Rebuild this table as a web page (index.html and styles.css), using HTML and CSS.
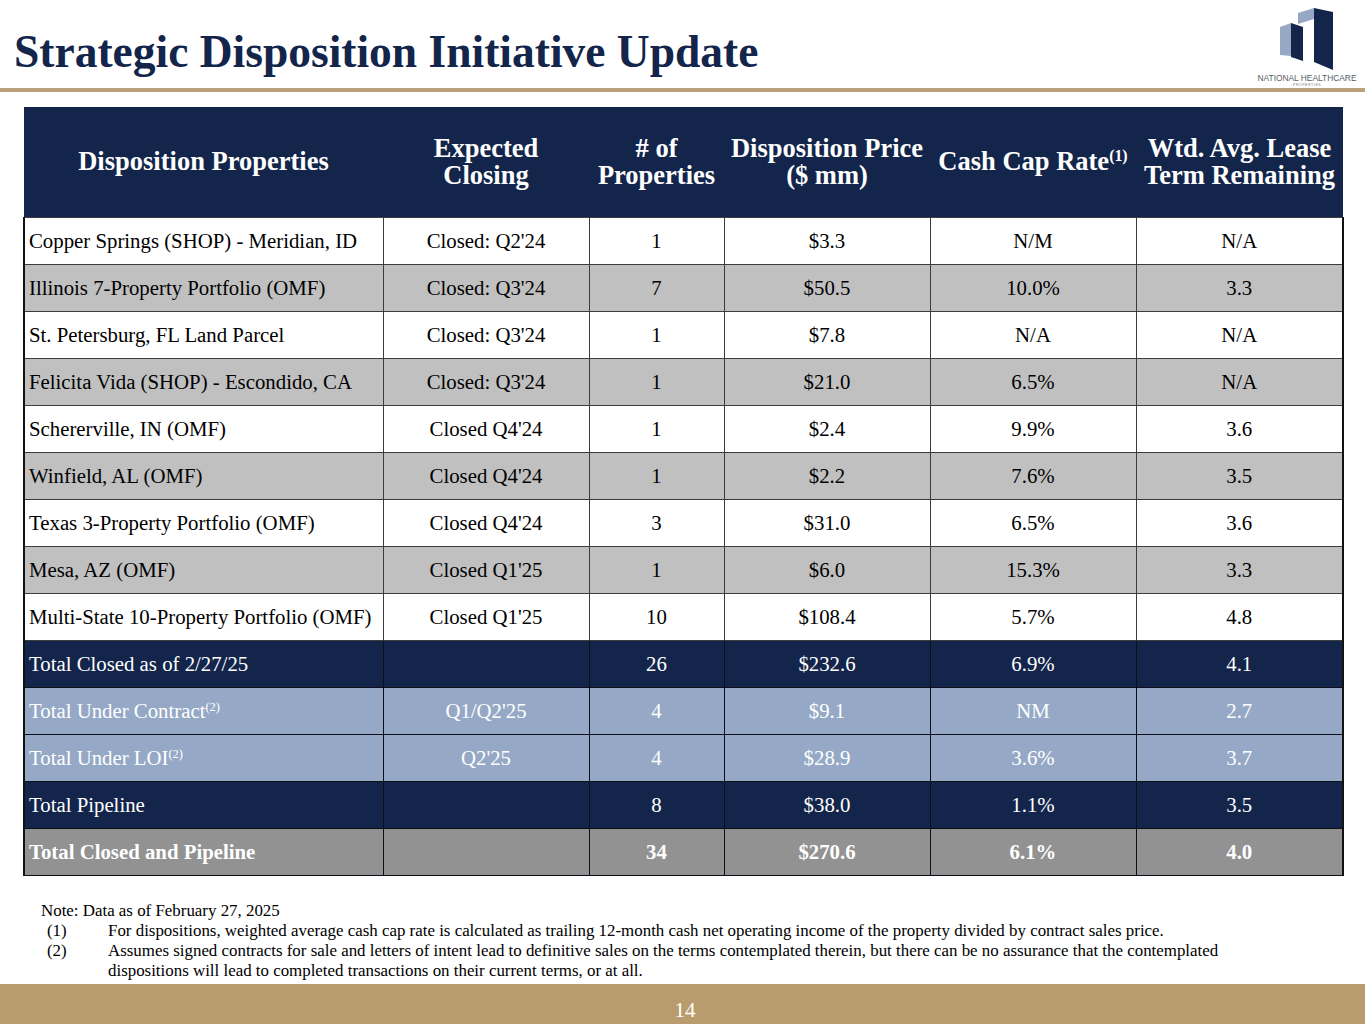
FILE: index.html
```html
<!DOCTYPE html>
<html lang="en">
<head>
<meta charset="utf-8">
<title>Strategic Disposition Initiative Update</title>
<link rel="stylesheet" href="styles.css">
</head>
<body>
<div class="page">
  <header class="top">
    <h1 class="title">Strategic Disposition Initiative Update</h1>
    <div class="logo">
      <svg class="logo-mark" width="56" height="64" viewBox="0 0 56 64" aria-hidden="true">
        <polygon points="19,7 35,2 35,13 19,18" fill="#97a8c4"/>
        <polygon points="35,2 54,6 54,64 35,56" fill="#13254b"/>
        <polygon points="1,21 12,17 12,50 1,49" fill="#97a8c4"/>
        <polygon points="12,17 24,21 24,55 12,51" fill="#13254b"/>
      </svg>
      <div class="logo-name">NATIONAL HEALTHCARE</div>
      <div class="logo-sub">PROPERTIES</div>
    </div>
  </header>
  <div class="rule"></div>

  <table class="disp">
    <colgroup>
      <col class="c1"><col class="c2"><col class="c3"><col class="c4"><col class="c5"><col class="c6">
    </colgroup>
    <thead>
      <tr>
        <th>Disposition Properties</th>
        <th>Expected<br>Closing</th>
        <th># of<br>Properties</th>
        <th>Disposition Price<br>($ mm)</th>
        <th>Cash Cap Rate<sup>(1)</sup></th>
        <th>Wtd. Avg. Lease<br>Term Remaining</th>
      </tr>
    </thead>
    <tbody>
      <tr class="w"><td class="name">Copper Springs (SHOP) - Meridian, ID</td><td>Closed: Q2'24</td><td>1</td><td>$3.3</td><td>N/M</td><td>N/A</td></tr>
      <tr class="g"><td class="name">Illinois 7-Property Portfolio (OMF)</td><td>Closed: Q3'24</td><td>7</td><td>$50.5</td><td>10.0%</td><td>3.3</td></tr>
      <tr class="w"><td class="name">St. Petersburg, FL Land Parcel</td><td>Closed: Q3'24</td><td>1</td><td>$7.8</td><td>N/A</td><td>N/A</td></tr>
      <tr class="g"><td class="name">Felicita Vida (SHOP) - Escondido, CA</td><td>Closed: Q3'24</td><td>1</td><td>$21.0</td><td>6.5%</td><td>N/A</td></tr>
      <tr class="w"><td class="name">Schererville, IN (OMF)</td><td>Closed Q4'24</td><td>1</td><td>$2.4</td><td>9.9%</td><td>3.6</td></tr>
      <tr class="g"><td class="name">Winfield, AL (OMF)</td><td>Closed Q4'24</td><td>1</td><td>$2.2</td><td>7.6%</td><td>3.5</td></tr>
      <tr class="w"><td class="name">Texas 3-Property Portfolio (OMF)</td><td>Closed Q4'24</td><td>3</td><td>$31.0</td><td>6.5%</td><td>3.6</td></tr>
      <tr class="g"><td class="name">Mesa, AZ (OMF)</td><td>Closed Q1'25</td><td>1</td><td>$6.0</td><td>15.3%</td><td>3.3</td></tr>
      <tr class="w"><td class="name">Multi-State 10-Property Portfolio (OMF)</td><td>Closed Q1'25</td><td>10</td><td>$108.4</td><td>5.7%</td><td>4.8</td></tr>
      <tr class="n"><td class="name">Total Closed as of 2/27/25</td><td></td><td>26</td><td>$232.6</td><td>6.9%</td><td>4.1</td></tr>
      <tr class="b"><td class="name">Total Under Contract<sup>(2)</sup></td><td>Q1/Q2'25</td><td>4</td><td>$9.1</td><td>NM</td><td>2.7</td></tr>
      <tr class="b"><td class="name">Total Under LOI<sup>(2)</sup></td><td>Q2'25</td><td>4</td><td>$28.9</td><td>3.6%</td><td>3.7</td></tr>
      <tr class="n"><td class="name">Total Pipeline</td><td></td><td>8</td><td>$38.0</td><td>1.1%</td><td>3.5</td></tr>
      <tr class="t"><td class="name">Total Closed and Pipeline</td><td></td><td>34</td><td>$270.6</td><td>6.1%</td><td>4.0</td></tr>
    </tbody>
  </table>

  <div class="notes">
    <p class="note-head">Note: Data as of February 27, 2025</p>
    <ol class="note-list">
      <li><span class="num">(1)</span><span class="txt">For dispositions, weighted average cash cap rate is calculated as trailing 12-month cash net operating income of the property divided by contract sales price.</span></li>
      <li><span class="num">(2)</span><span class="txt">Assumes signed contracts for sale and letters of intent lead to definitive sales on the terms contemplated therein, but there can be no assurance that the contemplated dispositions will lead to completed transactions on their current terms, or at all.</span></li>
    </ol>
  </div>

  <footer class="foot">14</footer>
</div>
</body>
</html>
```

FILE: styles.css
```css
* { box-sizing: border-box; }
html, body { margin: 0; padding: 0; background: #fff; }
body { font-family: "Liberation Serif", "Times New Roman", serif; color: #000; }

.page {
  width: 1365px;
  height: 1024px;
  display: flex;
  flex-direction: column;
  overflow: hidden;
}

.top {
  height: 88px;
  display: flex;
  justify-content: space-between;
  align-items: flex-start;
}
.title {
  margin: 28px 0 0 14px;
  font-size: 45.5px;
  line-height: 48px;
  font-weight: bold;
  color: #13254b;
  letter-spacing: 0;
}
.logo {
  width: 110px;
  margin: 6px 3px 0 0;
  display: flex;
  flex-direction: column;
  align-items: center;
  font-family: "Liberation Sans", Arial, sans-serif;
}
.logo-mark { display: block; overflow: visible; }
.logo-name {
  margin-top: 4px;
  font-size: 8.4px;
  line-height: 9px;
  color: #555c66;
  white-space: nowrap;
}
.logo-sub {
  font-size: 3.5px;
  line-height: 4px;
  color: #777;
  letter-spacing: 0.6px;
}

.rule { height: 4px; background: #b9a27a; }

.disp {
  margin: 15px 0 0 23px;
  width: 1319px;
  table-layout: fixed;
  border-collapse: collapse;
  font-size: 20.8px;
}
.c1 { width: 359px; }
.c2 { width: 206px; }
.c3 { width: 135px; }
.c4 { width: 206px; }
.c5 { width: 206px; }
.c6 { width: 207px; }

.disp thead th {
  height: 110px;
  background: #13254b;
  color: #fff;
  font-size: 26.5px;
  font-weight: bold;
  line-height: 27px;
  text-align: center;
  vertical-align: middle;
  padding: 0;
  white-space: nowrap;
}
.disp thead sup, .disp tbody sup {
  font-size: 0.6em;
  line-height: 0;
  vertical-align: 0.55em;
}
.disp tbody td {
  height: 47px;
  padding: 0 4px;
  text-align: center;
  vertical-align: middle;
  border: 1px solid #3c3c3c;
  white-space: nowrap;
}
.disp tbody td.name { text-align: left; }

.disp tr.w td { background: #fff; }
.disp tr.g td { background: #c0c0c0; }
.disp tr.n td { background: #13254b; color: #fff; border-color: #0a0f1a; }
.disp tr.b td { background: #95a9c6; color: #fff; border-color: #0a0f1a; }
.disp tr.t td { background: #929292; color: #fff; font-weight: bold; border-color: #0a0f1a; }
.disp tbody td:first-child { border-left: 2px solid #111; }
.disp tbody td:last-child { border-right: 2px solid #111; }

.notes {
  margin: 25px 0 0 41px;
  font-size: 16.9px;
  line-height: 20px;
}
.note-head { margin: 0; }
.note-list { margin: 0; padding: 0; list-style: none; }
.note-list li { display: flex; }
.note-list .num { width: 67px; padding-left: 6px; flex: none; }
.note-list .txt { width: 1130px; }

.foot {
  margin-top: auto;
  height: 40px;
  background: #b89c6e;
  color: #fff;
  font-size: 21px;
  line-height: 22px;
  padding-top: 15px;
  text-align: center;
  padding-left: 5px;
}
```
